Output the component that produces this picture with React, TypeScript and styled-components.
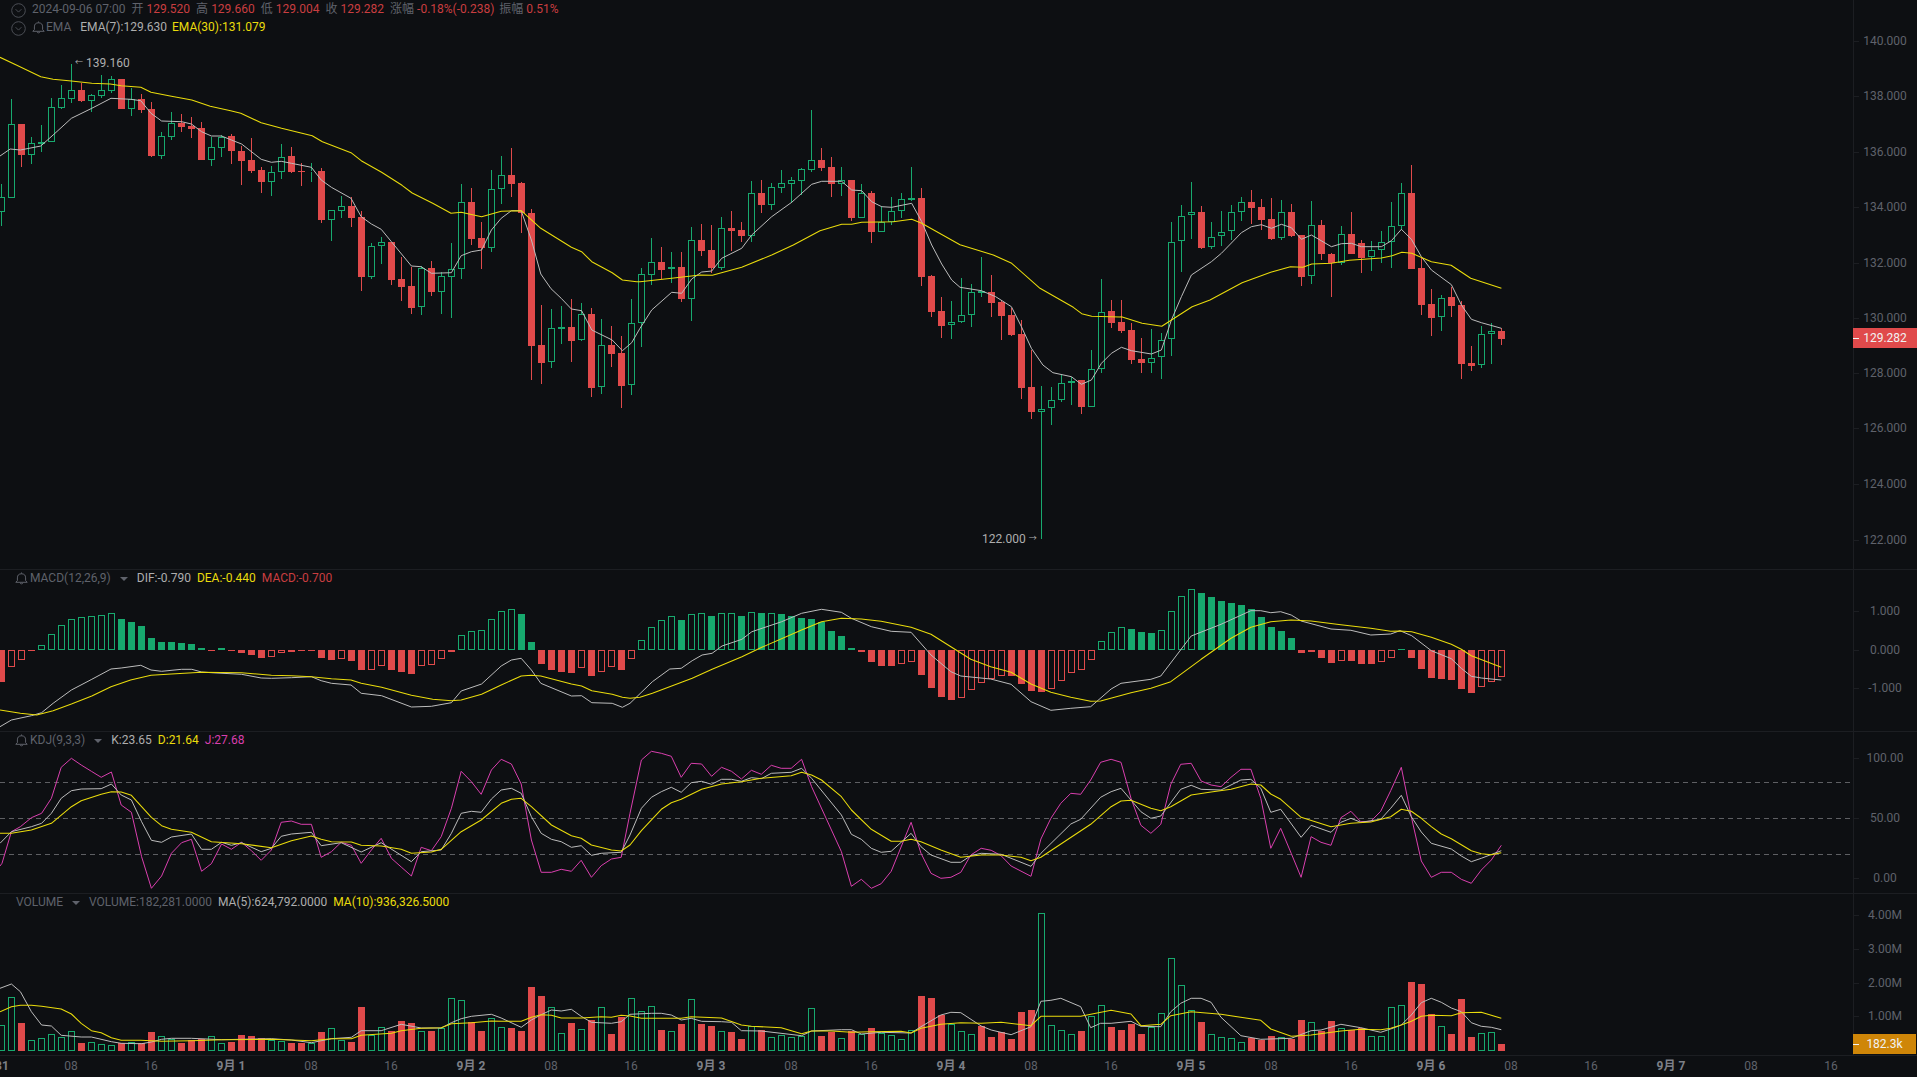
import React from 'react';
import styled, { createGlobalStyle } from 'styled-components';

const C = {
  bg: '#0d0f12', line: '#1c1e22', text: '#5f626b', text2: '#7d8088', red: '#e04a4b', redText: '#c93e40',
  green: '#17a96e', yellow: '#eadc0c', white: '#bcbcbc', pink: '#d93fae', soft: '#aeaeae', orange: '#cf8608',
};

type Pt = [number, number];
const W = 1853;
const X = (i: number) => 10 * i;

// ---- candle data: [high, bodyTop, bodyBottom, low, up] measured at 3x, per block origin
const cA = [
[552,592,637,678,1],[298,373,593,593,1],[373,373,465,500,0],[410,430,464,492,1],[375,425,432,455,1],[293,322,425,425,1],[254,295,324,326,1],[192,271,296,308,1],[250,270,303,306,0],[283,286,302,336,1],
[225,271,287,295,1],[229,238,272,278,1],[237,237,327,327,0],[265,298,326,347,1],[283,297,330,340,0],[305,327,468,470,0],[397,409,467,477,1],[335,370,410,420,1],[343,368,381,395,0],[352,377,387,415,0],
[367,384,480,480,0],[412,442,479,498,1],[405,410,443,472,1],[403,408,453,492,0],[437,453,483,556,0],[413,480,513,518,0],[500,510,546,580,0],[497,517,545,587,1],[433,470,517,537,1],[440,468,516,518,0],
[490,513,517,558,0],[490,514,517,547,1],[503,513,660,670,0],[630,631,659,722,1],[588,619,632,654,1],[592,618,654,682,0],[633,652,831,874,0],[728,739,831,836,1],[710,727,739,792,1],[725,726,840,855,0],
[772,837,861,903,0],[800,858,924,942,0],[797,805,922,945,1],[782,804,876,887,0],[815,829,875,942,1],[730,806,830,953,1],[552,607,806,836,1],[565,606,717,735,0],[667,714,745,806,0],[511,568,743,755,1],
[467,526,568,612,1],[445,525,552,590,0],[545,549,640,698,0],[627,640,1038,1140,0]];
const cB = [
[255,376,428,493,0],[267,325,427,445,1],[257,322,326,373,1],[238,322,362,426,0],[250,283,361,362,1],[265,282,503,532,0],[298,376,502,522,1],[317,376,401,440,0],[349,399,497,563,0],[236,310,496,525,1],[145,163,310,382,1]];
const cC = [
[475,547,584,615,1],[500,546,569,597,0],[517,562,568,610,1],[515,561,657,665,0],[442,481,656,722,1],[432,480,513,527,0],[435,511,564,580,0],[412,445,563,570,1],[393,444,453,513,0],[427,450,468,487,0],
[303,340,467,487,1],[300,339,375,400,0],[310,322,375,390,1],[270,310,323,340,1],[291,301,311,370,1],[265,268,302,345,1],[90,241,269,275,1],[204,240,264,273,0],[230,261,312,350,0],[261,301,311,347,1],
[300,300,414,422,0],[313,340,413,414,1],[333,339,456,489,0],[378,425,455,456,1],[350,394,425,435,1],[340,358,394,413,1],[260,355,359,362,1],[324,354,591,617,0],[586,588,696,710,0],[652,693,738,775,0],
[663,727,736,777,1],[595,706,727,729,1],[613,637,706,741,1],[532,634,638,650,1],[585,637,669,712,0],[660,667,708,780,0],[685,705,765,767,0]];
const cD = [
[510,553,714,747,0],[600,712,785,806,0],[707,776,785,1168,1],[710,749,775,825,1],[675,700,749,755,1],[680,692,700,765,1],[690,691,770,791,0],[600,658,770,770,1],[388,485,658,668,1],[450,484,518,533,0],
[451,517,542,550,0],[520,541,629,643,0],[563,628,640,668,0],[538,623,640,670,1],[550,569,622,686,1],[216,275,568,618,1],[165,197,274,365,1],[96,187,196,267,1],[167,187,293,296,0],[216,260,292,296,1],
[184,245,259,288,1],[165,187,244,270,1],[140,157,187,212,1],[121,157,173,222,0],[147,172,209,240,0],[144,208,266,269,0],[151,187,265,270,1],[162,186,257,260,0],[255,256,380,408,0],[154,226,379,403,1],
[209,226,311,330,0],[310,312,339,442,0],[229,253,340,345,1],[186,252,312,312,0],[270,280,323,368,0],[273,301,322,362,1],[243,275,301,338,1],[157,229,275,353,1],[100,130,229,240,1],[45,129,357,357,0],
[325,355,464,495,0],[417,462,503,557,0],[435,443,502,542,1],[410,442,467,502,0],[452,466,641,688,0],[588,640,647,663,0],[528,553,646,654,1],[518,544,553,642,1],[533,544,566,586,0]];
const toReal = (oy: number, rows: number[][]) => rows.map(([h, t, b, l, u]) => ({ h: oy + h / 3, t: oy + t / 3, b: oy + b / 3, l: oy + l / 3, up: !!u }));
const candles = [...toReal(0, cA), ...toReal(220, cB), ...toReal(80, cC), ...toReal(150, cD)];

// ---- polyline helper: flat x,y list in a zoomed crop -> page coordinates
const P = (sx: number, ox: number, oy: number, a: number[], from = -1e9, to = 1e9): Pt[] => {
  const out: Pt[] = [];
  for (let k = 0; k < a.length; k += 2) {
    const x = a[k] / sx + ox;
    if (x >= from && x < to) out.push([x, oy + a[k + 1] / 3]);
  }
  return out;
};
const ZA = (a: number[], oy: number, from?: number, to?: number) => P(2.45, 0, oy, a, from, to);
const Z3 = (ox: number, oy: number, a: number[], from?: number, to?: number) => P(3, ox, oy, a, from, to);
const Z28 = (oy: number, a: number[], from?: number) => P(2.8, 960, oy, a, from);
const Z2 = (oy: number, a: number[], to: number) => P(2.01, 630, oy, a, undefined, to);

const ema30 = [
  ...ZA([0,172,40,195,100,230,130,238,175,243,225,250,270,252,297,257,345,262,370,277,420,289,470,300,515,319,565,332,590,340,640,368,690,385,740,400,765,407,790,425,860,458,885,482,935,517,985,556,1010,579,1060,610,1105,640,1130,637,1180,650,1228,634,1277,632,1325,685,1400,742,1425,755,1450,785,1500,818,1525,840,1560,845],0),
  ...Z3(380,220,[755,185,810,182,875,176],637,640),
  ...Z3(640,80,[0,605,95,595,180,585,217,586,305,562,395,525,460,495,540,452,605,433,635,433,665,427,760,425,815,418,845,430,960,494,1060,525,1115,550,1200,625,1300,682,1325,701,1355,709,1440,711]),
  ...Z28(150,[452,500,510,520,565,529,650,470,700,450,790,398,870,367,925,350,960,352,985,342,1040,340,1090,331,1180,324,1210,317,1237,307,1265,310,1320,335,1375,346,1430,385,1516,415],1121),
];
const ema7 = [
  ...ZA([0,468,25,447,50,450,100,438,130,405,175,355,225,325,272,295,320,298,345,302,370,340,396,363,445,365,469,372,494,395,518,408,543,408,567,420,592,432,640,478,665,487,689,484,714,490,763,502,787,540,812,562,860,595,885,650,910,672,934,688,959,725,1008,798,1032,800,1057,820,1106,818,1130,767,1155,755,1180,750,1204,690,1228,655,1253,632,1277,632,1302,720,1325,822,1350,866,1375,895,1400,927,1425,932,1450,990,1500,1020,1525,1052],0),
  ...Z3(380,220,[755,368,785,310],630,640),
  ...Z3(640,80,[0,745,35,690,95,637,125,640,155,597,185,576,215,573,245,535,305,505,335,465,395,410,455,367,515,313,545,304,605,304,635,330,665,332,695,365,725,380,755,382,815,370,845,425,875,495,905,552,935,600],0,960),
  ...Z28(150,[0,412,60,422,100,440,144,470,172,530,200,595,232,645,260,668,312,680,340,703,368,690,396,640,424,610,452,592,480,602,536,612,564,600,592,510,620,440,648,375,704,335,732,310,788,248,816,230,844,224,872,235,900,223,928,233,956,268,984,255,1040,290,1068,281,1096,280,1124,290,1180,290,1208,272,1236,238,1264,268,1292,320,1320,360,1376,404,1404,465,1432,508,1460,518,1516,535]),
];

// ---- MACD histogram: bar end (3x from the zero line crop), 1 = hollow
const mA = [[365,0],[320,1],[299,1],[273,0],[256,1],[223,1],[196,1],[178,1],[172,1],[169,1],[166,1],[160,1],[177,0],[186,0],[198,0],[234,0],[246,0],[246,0],[250,0],[252,0],[265,0],[273,0],[265,0],[273,0],[278,0],[285,0],[293,0],[292,1],[280,1],[277,1],[274,0],[273,0],[294,0],[300,0],[298,1],[302,0],[330,0],[329,1],[319,1],[330,0],[336,0],[342,0],[319,1],[316,1],[296,1],[277,1],[226,1],[214,1],[211,1],[178,1],[154,1],[148,1],[162,0],[246,0],[312,0],[330,0],[336,0],[340,0],[323,1],[347,0],[335,1],[322,1],[330,0],[296,1]];
const mB = [[151,1],[111,1],[91,1],[79,1],[90,0],[72,1],[69,1],[78,0],[69,1],[69,1],[78,0],[66,1],[69,0],[69,1],[72,0],[78,0],[84,0],[87,0],[96,0],[123,0],[138,0],[174,0],[186,0],[216,0],[228,0],[228,0],[221,1],[215,1],[255,0],[294,0],[321,0],[330,0],[323,1],[300,1],[278,1],[268,1],[257,1],[258,0],[282,0],[303,0],[306,0],[297,1],[272,1],[248,1],[239,1],[209,1],[154,1],[127,1],[112,1],[117,0],[126,0],[129,0],[121,1],[64,1],[19,1],[-4,1],[9,0],[21,0],[33,0],[39,0],[45,0],[57,0],[81,0],[111,0],[123,0],[144,0],[189,0],[186,0],[204,0],[219,0],[212,1],[213,0],[222,0],[222,0],[215,1],[203,1]];
const mC = [[267,0],[293,0],[326,0],[353,0],[356,0],[359,0],[386,0],[398,0],[382,1],[365,1],[352,1]];
const macdHist = [
  ...mA.map(([v, h]) => ({ v: 560 + v / 3, h: !!h })),
  ...mB.map(([v, h]) => ({ v: 590 + v / 3, h: !!h })),
  ...mC.map(([v, h]) => ({ v: 560 + v / 3, h: !!h })),
];
const macdWhite = [
  ...ZA([0,500,28,480,77,467,102,458,130,430,175,390,225,358,272,327,297,324,345,316,370,330,396,334,445,328,470,328,494,336,518,338,592,343,640,354,665,355,714,353,763,350,787,362,812,370,860,375,885,400,935,407,1008,441,1057,439,1106,428,1130,393,1180,372,1228,318,1253,300,1277,295,1302,330,1325,370,1400,408,1425,407,1450,428,1500,430,1525,442],560),
  ...Z2(590,[0,340,45,275,80,237,103,235,125,212,145,195,165,190,185,168,225,148,245,125,305,95,345,70,385,58,425,67,445,85,485,110,525,124,565,127,605,195,645,245,665,258,725,267,766,283,806,335,846,361,886,355,926,350,967,297,987,280,1047,268,1067,258,1128,138,1188,103,1248,62,1268,62,1288,68,1308,65,1329,75,1349,93,1409,117,1449,121,1489,135,1529,132],1400),
  ...Z3(1400,560,[0,212,35,227,94,272,154,296,184,325,214,349,244,354,304,360]),
];
const macdYellow = [
  ...ZA([0,450,50,460,90,465,130,452,175,432,225,408,272,380,320,360,370,346,420,342,494,337,592,338,665,346,714,347,763,350,812,356,860,360,885,370,935,382,1008,406,1060,418,1106,422,1130,420,1180,403,1228,375,1277,348,1302,346,1325,348,1400,372,1425,378,1450,392,1500,403,1525,412],560),
  ...Z2(590,[0,325,20,322,45,310,125,265,165,238,225,200,265,172,345,120,385,95,425,85,465,87,505,94,565,112,605,133,645,170,685,208,725,230,766,247,806,282,846,307,886,322,926,334,946,333,1007,308,1047,295,1087,275,1148,208,1208,145,1248,112,1288,95,1329,90,1369,93,1429,104,1489,115,1529,124],1400),
  ...Z3(1400,560,[0,213,35,215,94,232,154,253,184,268,214,287,304,322]),
];

const kdjJ = [
  ...ZA([0,918,5,910,28,815,50,800,77,773,102,760,126,715,150,622,175,595,199,615,224,634,248,652,273,636,297,735,322,757,347,890,371,985,396,948,420,880,445,848,469,838,494,934,518,911,543,852,567,868,592,847,616,872,640,901,665,870,689,787,714,783,738,793,763,793,787,892,812,875,836,847,861,856,885,910,910,870,934,835,959,895,983,921,1008,948,1032,862,1057,872,1081,830,1106,745,1130,634,1155,665,1179,703,1204,630,1228,598,1253,612,1277,672,1302,840,1326,937,1351,937,1375,928,1400,934,1424,901,1449,952,1473,917,1498,897,1522,892],560),
  ...Z2(740,[0,220,23,60,43,34,63,40,83,49,103,112,123,70,144,72,164,109,184,82,204,94,224,117,244,91,264,103,284,76,304,85,324,85,345,58,365,140,425,335,445,439,465,418,485,445,505,431,525,394,565,247,585,340,605,400,625,415,645,412,665,397,685,345,706,325,726,331,746,347,766,378,806,409,826,297,846,235,866,190,886,160,906,163,926,120,946,67,967,58,987,67,1007,175,1027,256,1047,280,1067,253,1087,133,1107,73,1128,70,1148,123,1168,135,1188,140,1208,112,1228,88,1248,88,1268,175,1288,325,1308,265,1329,340,1349,412,1369,290,1389,307,1409,316,1429,233,1449,214,1469,245,1489,244,1509,214,1529,152],1400),
  ...Z3(1400,560,[4,622,34,770,64,903,94,952,124,937,154,937,184,958,214,970,244,930,274,900,304,856]),
];
const kdjK = [
  ...ZA([0,850,28,815,77,800,102,790,126,760,150,715,175,692,199,687,248,686,273,672,297,705,322,720,347,785,371,841,396,847,420,831,469,822,494,868,518,868,543,847,567,856,592,848,640,875,665,865,689,829,714,822,763,817,787,857,836,848,885,876,934,848,1008,905,1032,875,1081,870,1106,820,1130,760,1155,754,1179,757,1204,717,1228,690,1253,685,1277,700,1302,770,1326,820,1351,838,1375,845,1400,862,1424,857,1449,886,1473,880,1522,877],560),
  ...Z2(740,[0,285,23,205,43,172,63,155,83,142,103,157,123,128,144,124,164,133,184,118,204,118,224,124,244,113,264,116,284,100,324,97,345,85,365,115,425,225,445,283,465,298,485,325,505,337,525,334,565,280,585,320,605,345,645,367,665,367,685,347,706,340,746,343,806,379,826,340,886,252,906,238,946,172,967,155,987,145,1027,215,1047,235,1067,228,1107,148,1128,136,1148,148,1188,150,1228,120,1248,118,1268,145,1288,217,1308,208,1349,292,1369,256,1409,277,1429,247,1449,235,1469,247,1509,238,1529,205],1400),
  ...Z3(1400,560,[4,706,34,770,64,816,94,850,154,867,184,888,214,905,244,895,304,872]),
];
const kdjD = [
  ...ZA([0,820,28,820,77,810,126,790,175,740,199,722,248,703,273,695,297,696,322,706,347,740,371,772,396,797,420,808,469,817,518,845,592,851,665,863,714,842,763,828,787,838,812,845,861,846,885,856,934,858,983,868,1008,880,1057,876,1081,868,1130,815,1179,780,1228,730,1253,718,1277,715,1302,740,1351,795,1400,827,1424,835,1449,855,1498,870,1522,873],560),
  ...Z2(740,[0,315,23,272,63,208,83,188,103,178,144,148,184,132,224,125,264,115,324,107,345,97,365,105,385,120,425,170,445,210,485,268,525,304,545,304,565,298,585,305,625,330,665,352,706,345,746,345,786,352,806,362,826,352,926,253,967,200,987,183,1007,181,1047,205,1067,212,1087,200,1128,165,1168,156,1208,148,1248,132,1268,135,1288,162,1308,178,1349,232,1409,260,1449,250,1489,246,1529,230],1400),
  ...Z3(1400,560,[4,748,34,754,64,775,94,800,124,822,154,836,214,872,244,881,274,884,304,878]),
];

// ---- volume: bar top, 1 = up
const vA = [[436,1],[352,1],[429,0],[481,1],[475,1],[463,1],[472,1],[454,1],[489,0],[487,1],[493,1],[496,1],[489,0],[487,1],[489,0],[456,0],[469,1],[478,1],[489,0],[480,0],[478,0],[469,1],[490,1],[486,0],[465,0],[468,0],[474,0],[481,1],[484,1],[489,0],[489,0],[490,1],[456,0],[445,1],[481,1],[486,0],[381,0],[466,1],[442,1],[454,0],[423,0],[429,0],[454,1],[452,0],[445,1],[355,1],[361,1],[427,0],[453,0],[415,1],[442,1],[444,0],[453,0],[321,0],[348,0],[382,1],[460,1],[429,0],[448,1],[420,0],[382,1],[462,0],[411,0]];
const vB = [[280,1],[319,1],[304,1],[375,0],[379,1],[357,0],[283,1],[357,0],[363,0],[379,1],[381,0],[402,0],[362,1],[376,0],[397,1],[391,1],[397,1],[394,1],[310,1],[393,0],[380,0],[400,1],[378,0],[388,1],[369,0],[384,1],[391,1],[403,1],[376,1],[273,0],[279,0],[330,0],[357,1],[379,1],[388,1],[364,0],[396,0],[382,0],[402,0],[321,0],[315,0],[25,1],[361,1],[376,1],[388,1],[378,0],[334,1],[301,1],[366,0],[375,0],[357,0],[387,0],[366,1],[325,1],[160,1],[241,1],[316,1],[351,0],[388,1],[397,1],[400,1],[412,1],[400,0],[405,0],[393,0],[397,1],[402,0],[345,0],[352,1],[378,0],[348,0],[370,1],[375,0],[369,0],[394,1],[394,1],[307,1]];
const vC = [[376,1],[306,0],[312,0],[402,0],[439,1],[462,0],[357,0],[471,0],[460,1],[457,1],[492,0]];
const volume = [
  ...vA.map(([v, u]) => ({ v: 880 + v / 3, up: !!u })),
  ...vB.map(([v, u]) => ({ v: 905 + v / 3, up: !!u })),
  ...vC.map(([v, u]) => ({ v: 880 + v / 3, up: !!u })),
];
const volWhite = [
  ...ZA([0,325,28,312,50,335,77,395,102,435,126,438,150,466,199,471,224,471,273,485,297,490,347,491,371,486,396,478,420,475,469,475,543,479,665,476,714,480,763,488,812,476,861,472,885,452,934,452,983,433,1032,444,1081,444,1106,428,1130,416,1155,409,1204,403,1228,414,1277,442,1302,420,1326,404,1351,390,1375,393,1400,388,1424,409,1449,427,1498,430,1522,425],880),
  ...Z2(905,[0,328,43,325,63,325,83,330,103,345,123,340,144,349,184,350,204,352,224,377,264,378,345,392,365,378,425,374,445,374,465,387,505,382,565,384,585,365,625,330,645,322,665,323,706,363,726,375,766,389,806,365,826,289,846,286,866,280,906,305,926,368,946,355,967,355,1007,349,1027,364,1067,365,1087,320,1107,295,1128,280,1148,280,1168,292,1188,337,1228,392,1268,403,1329,400,1369,377,1389,375,1429,358,1469,368,1509,382,1529,372],1400),
  ...Z3(1400,880,[4,435,34,405,64,368,94,355,124,367,154,384,184,395,214,428,244,439,274,442,304,449]),
];
const volYellow = [
  ...ZA([0,395,28,380,50,376,77,376,102,379,150,387,175,402,199,430,224,452,248,458,273,473,297,481,345,481,396,484,469,482,543,479,665,478,763,482,812,476,861,476,885,466,959,460,983,452,1032,445,1081,443,1106,431,1155,428,1204,423,1228,424,1277,424,1302,412,1326,404,1351,406,1375,414,1424,414,1473,410,1498,412,1522,406],880),
  ...Z2(905,[0,333,23,340,103,340,123,335,184,339,224,360,244,364,304,368,345,386,365,378,405,378,445,382,485,380,545,379,565,384,585,370,625,358,665,353,706,355,746,352,806,362,826,334,906,334,967,316,1007,327,1027,362,1067,358,1087,332,1128,320,1188,328,1268,346,1288,372,1329,394,1369,390,1429,378,1469,373,1509,374,1529,370],1400),
  ...Z3(1400,880,[4,435,34,424,64,409,94,406,154,407,184,398,244,397,304,415]),
];

const GlobalStyle = createGlobalStyle`
  html, body { margin: 0; padding: 0; background: ${C.bg}; overflow: hidden; }
  body { font-family: Roboto, "Noto Sans CJK SC", "Liberation Sans", sans-serif; }
`;

const Page = styled.div`
  display: flex; flex-direction: column; width: 1917px; height: 1077px;
  background: ${C.bg}; font-size: 12px; line-height: 16px; color: ${C.text}; overflow: hidden;
`;
const Pane = styled.section<{ $h: number }>`
  display: flex; height: ${p => p.$h}px; flex: none; border-bottom: 1px solid ${C.line}; box-sizing: content-box;
`;
const Plot = styled.div`
  position: relative; width: ${W}px; flex: none; overflow: hidden;
`;
const ChartSvg = styled.svg`
  display: block; width: 100%; height: 100%;
`;
const Axis = styled.div`
  position: relative; flex: 1; border-left: 1px solid ${C.line};
`;
const AxisMark = styled.div`
  position: absolute; left: 0; right: 0; height: 0;
  &::before { content: ''; position: absolute; left: 0; top: 0; width: 5px; height: 1px; background: ${C.line}; }
`;
const AxisValue = styled.span`
  position: absolute; left: 0; right: 1px; top: -8px; text-align: center; color: ${C.text};
`;
const Tag = styled.div<{ $bg: string; $inset: number }>`
  position: absolute; left: -1px; right: ${p => p.$inset}px; height: 20px;
  display: flex; align-items: center; justify-content: center;
  background: ${p => p.$bg}; color: #f2f2f2;
  &::before { content: ''; position: absolute; left: 0; top: 10px; width: 6px; height: 1px; background: #f2f2f2; }
`;
const LegendStack = styled.div`
  position: absolute; left: 11px; top: 1px; display: flex; flex-direction: column; gap: 2px;
`;
const LegendRow = styled.div`
  display: flex; align-items: center; height: 16px; white-space: nowrap;
`;
const IndicatorLegend = styled(LegendRow)<{ $top: number }>`
  position: absolute; left: 15px; top: ${p => p.$top}px;
`;
const Field = styled.span<{ $c?: string; $ml?: number }>`
  color: ${p => p.$c || C.text}; margin-left: ${p => p.$ml ?? 0}px;
`;
const Chevron = styled.svg`
  width: 15px; height: 15px; flex: none; margin: 2px 6px 0 0; display: block;
`;
const BellIcon = styled.svg`
  width: 13px; height: 13px; flex: none; display: block;
`;
const Caret = styled.i<{ $ml: number; $mr: number }>`
  display: block; flex: none; width: 0; height: 0; margin: 1px ${p => p.$mr}px 0 ${p => p.$ml}px;
  border-left: 4px solid transparent; border-right: 4px solid transparent; border-top: 4px solid ${C.text};
`;
const Extreme = styled.span`
  position: absolute; display: flex; align-items: center; gap: 3px; color: ${C.soft}; white-space: nowrap;
`;
const ExtremeArrow = styled.span`
  font-size: 8px; line-height: 16px;
`;
const TimeAxis = styled.footer`
  display: flex; flex: 1; overflow: hidden; align-items: flex-start; padding-top: 2px;
`;
const TimeCell = styled.span<{ $day?: boolean }>`
  flex: none; width: 80px; text-align: center; font-size: 12px;
  color: ${p => (p.$day ? C.text2 : C.text)}; font-weight: ${p => (p.$day ? 700 : 400)};
  &:first-child { margin-left: -49px; }
`;

const path = (pts: Pt[]) => pts.map(p => `${p[0].toFixed(1)},${p[1].toFixed(1)}`).join(' ');
const Line = ({ pts, c, w = 1 }: { pts: Pt[]; c: string; w?: number }) => (
  <polyline points={path(pts)} fill="none" stroke={c} strokeWidth={w} strokeLinejoin="round" />
);

const Bar = ({ i, top, bottom, c, hollow }: { i: number; top: number; bottom: number; c: string; hollow: boolean }) => {
  const y0 = Math.round(Math.min(top, bottom));
  const y1 = Math.max(y0 + 1, Math.round(Math.max(top, bottom)));
  const x = X(i) - 2;
  if (hollow) return <rect x={x + 0.5} y={y0 + 0.5} width={6} height={Math.max(y1 - y0 - 1, 0)} fill="none" stroke={c} strokeWidth={1} />;
  return <rect x={x} y={y0} width={7} height={y1 - y0} fill={c} />;
};

const Candles = () => (
  <g shapeRendering="crispEdges">
    {candles.map((k, i) => {
      const c = k.up ? C.green : C.red;
      const top = Math.round(k.t), bot = Math.max(top + 1, Math.round(k.b));
      return (
        <g key={i}>
          <rect x={X(i) + 1} y={Math.round(k.h)} width={1} height={Math.max(top - Math.round(k.h), 0)} fill={c} />
          <rect x={X(i) + 1} y={bot} width={1} height={Math.max(Math.round(k.l) - bot, 0)} fill={c} />
          <Bar i={i} top={top} bottom={bot} c={c} hollow={k.up} />
        </g>
      );
    })}
  </g>
);

const Circle = () => (
  <Chevron viewBox="0 0 15 15" fill="none" stroke="#4b4e55" strokeWidth="1">
    <circle cx="7.5" cy="7.5" r="6.8" />
    <path d="M4.6 6.2 7.5 9.1l2.9-2.9" />
  </Chevron>
);
const Bell = () => (
  <BellIcon viewBox="0 0 13 13" fill="none" stroke={C.text} strokeWidth="1">
    <path d="M6.5 .5v1.2" />
    <path d="M2.4 8.6V5.9a4.1 4.1 0 0 1 8.2 0v2.7l1.6 1.7H.8z" strokeLinejoin="round" />
    <path d="M5 10.8a1.6 1.6 0 0 0 3 0" />
  </BellIcon>
);

const Ticks = ({ rows }: { rows: { y: number; t: string }[] }) => (
  <>
    {rows.map(r => (
      <AxisMark key={r.t} style={{ top: r.y }}>
        <AxisValue>{r.t}</AxisValue>
      </AxisMark>
    ))}
  </>
);

const priceTicks = [['140.000',41],['138.000',96],['136.000',152],['134.000',207],['132.000',263],['130.000',318],['128.000',373],['126.000',428],['124.000',484],['122.000',540]].map(([t, y]) => ({ t: t as string, y: y as number }));
const macdTicks = [{ t: '1.000', y: 41 }, { t: '0.000', y: 80 }, { t: '-1.000', y: 118 }];
const kdjTicks = [{ t: '100.00', y: 26 }, { t: '50.00', y: 86 }, { t: '0.00', y: 146 }];
const volTicks = [{ t: '4.00M', y: 21 }, { t: '3.00M', y: 55 }, { t: '2.00M', y: 88.5 }, { t: '1.00M', y: 122 }];

const timeLabels: [string, boolean][] = [['8月 31', true]];
['1', '2', '3', '4', '5', '6', '7'].forEach(d => {
  timeLabels.push(['08', false], ['16', false], [`9月 ${d}`, true]);
});
timeLabels.push(['08', false], ['16', false]);

export default function App() {
  return (
    <Page>
      <GlobalStyle />
      <Pane $h={569}>
        <Plot>
          <ChartSvg viewBox={`0 0 ${W} 569`}>
            <Candles />
            <Line pts={ema7} c={C.white} />
            <Line pts={ema30} c={C.yellow} w={1.05} />
          </ChartSvg>
          <LegendStack>
            <LegendRow>
              <Circle />
              <Field>2024-09-06 07:00</Field>
              <Field $ml={6}>开</Field><Field $c={C.redText} $ml={3}>129.520</Field>
              <Field $ml={6}>高</Field><Field $c={C.redText} $ml={3}>129.660</Field>
              <Field $ml={6}>低</Field><Field $c={C.redText} $ml={3}>129.004</Field>
              <Field $ml={6}>收</Field><Field $c={C.redText} $ml={3}>129.282</Field>
              <Field $ml={6}>涨幅</Field><Field $c={C.redText} $ml={3}>-0.18%(-0.238)</Field>
              <Field $ml={5}>振幅</Field><Field $c={C.redText} $ml={3}>0.51%</Field>
            </LegendRow>
            <LegendRow>
              <Circle />
              <Bell />
              <Field $ml={1}>EMA</Field>
              <Field $c={C.soft} $ml={9}>EMA(7):129.630</Field>
              <Field $c={C.yellow} $ml={5}>EMA(30):131.079</Field>
            </LegendRow>
          </LegendStack>
          <Extreme style={{ left: 75, top: 55 }}><ExtremeArrow>←</ExtremeArrow>139.160</Extreme>
          <Extreme style={{ left: 982, top: 531 }}>122.000<ExtremeArrow>→</ExtremeArrow></Extreme>
        </Plot>
        <Axis>
          <Ticks rows={priceTicks} />
          <Tag $bg={C.red} $inset={0} style={{ top: 328 }}>129.282</Tag>
        </Axis>
      </Pane>

      <Pane $h={161}>
        <Plot>
          <ChartSvg viewBox={`0 570 ${W} 161`}>
            <g shapeRendering="crispEdges">
              {macdHist.map((b, i) => (
                <Bar key={i} i={i} top={650} bottom={b.v} c={b.v < 650 ? C.green : C.red} hollow={b.h} />
              ))}
            </g>
            <Line pts={macdWhite} c={C.white} />
            <Line pts={macdYellow} c={C.yellow} w={1.05} />
          </ChartSvg>
          <IndicatorLegend $top={0}>
            <Bell />
            <Field $ml={2}>MACD(12,26,9)</Field>
            <Caret $ml={9} $mr={9} />
            <Field $c={C.soft}>DIF:-0.790</Field>
            <Field $c={C.yellow} $ml={6}>DEA:-0.440</Field>
            <Field $c={C.redText} $ml={6}>MACD:-0.700</Field>
          </IndicatorLegend>
        </Plot>
        <Axis><Ticks rows={macdTicks} /></Axis>
      </Pane>

      <Pane $h={161}>
        <Plot>
          <ChartSvg viewBox={`0 732 ${W} 161`}>
            <g stroke="#5e5f63" strokeWidth="1" strokeDasharray="5 4" shapeRendering="crispEdges">
              <line x1="0" x2={W} y1="782.5" y2="782.5" />
              <line x1="0" x2={W} y1="818.5" y2="818.5" />
              <line x1="0" x2={W} y1="854.5" y2="854.5" />
            </g>
            <Line pts={kdjJ} c={C.pink} />
            <Line pts={kdjK} c={C.white} />
            <Line pts={kdjD} c={C.yellow} w={1.05} />
          </ChartSvg>
          <IndicatorLegend $top={0}>
            <Bell />
            <Field $ml={2}>KDJ(9,3,3)</Field>
            <Caret $ml={9} $mr={9} />
            <Field $c={C.soft}>K:23.65</Field>
            <Field $c={C.yellow} $ml={6}>D:21.64</Field>
            <Field $c={C.pink} $ml={6}>J:27.68</Field>
          </IndicatorLegend>
        </Plot>
        <Axis><Ticks rows={kdjTicks} /></Axis>
      </Pane>

      <Pane $h={161}>
        <Plot>
          <ChartSvg viewBox={`0 894 ${W} 161`}>
            <g shapeRendering="crispEdges">
              {volume.map((b, i) => (
                <Bar key={i} i={i} top={b.v} bottom={1051} c={b.up ? C.green : C.red} hollow={b.up} />
              ))}
            </g>
            <Line pts={volWhite} c={C.white} />
            <Line pts={volYellow} c={C.yellow} w={1.05} />
          </ChartSvg>
          <IndicatorLegend $top={0}>
            <Field $ml={1}>VOLUME</Field>
            <Caret $ml={9} $mr={9} />
            <Field>VOLUME:182,281.0000</Field>
            <Field $c={C.soft} $ml={6}>MA(5):624,792.0000</Field>
            <Field $c={C.yellow} $ml={6}>MA(10):936,326.5000</Field>
          </IndicatorLegend>
        </Plot>
        <Axis>
          <Ticks rows={volTicks} />
          <Tag $bg={C.orange} $inset={1} style={{ top: 140 }}>182.3k</Tag>
        </Axis>
      </Pane>

      <TimeAxis>
        {timeLabels.map(([t, day], i) => (
          <TimeCell key={i} $day={day}>{t}</TimeCell>
        ))}
      </TimeAxis>
    </Page>
  );
}
